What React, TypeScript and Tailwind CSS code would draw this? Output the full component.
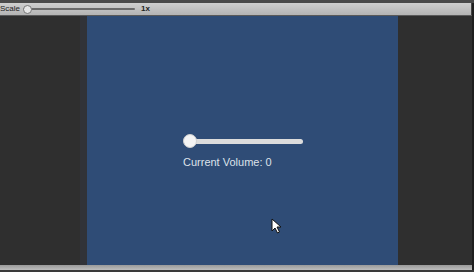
import React from "react";

const Cursor = () => (
  <svg width="11" height="16" viewBox="0 0 11 16" className="absolute left-[271px] top-[218px]">
    <path d="M1 1 L1 13 L4 10 L6.5 15 L8.5 14 L6 9 L10 9 Z" fill="#ffffff" stroke="#111" strokeWidth="1" />
  </svg>
);

export default function App() {
  return (
    <div className="relative w-[474px] h-[272px] bg-[#2e2e2e] overflow-hidden flex flex-col" style={{ fontFamily: "'Liberation Sans', Arial, sans-serif" }}>
      <div className="h-[3px] bg-[#4a4a4a]" />
      {/* toolbar */}
      <div className="h-[13px] bg-gradient-to-b from-[#cfcfcf] to-[#b4b4b4] border-b border-[#5a5a5a] flex items-center pr-[2px]">
        <span className="text-[8px] leading-none text-[#222]">Scale</span>
        <div className="relative ml-[3px] w-[112px] h-[9px] flex items-center">
          <div className="w-full h-[2px] bg-[#6a6a6a] rounded-full" />
          <div className="absolute left-0 top-0 w-[9px] h-[9px] rounded-full bg-[#e6e6e6] border border-[#777]" />
        </div>
        <span className="ml-[6px] text-[8px] font-bold leading-none text-[#222]">1x</span>
        <div className="flex-1" />
        <div className="w-[1px] h-full bg-[#444]" />
      </div>
      {/* main */}
      <div className="flex-1 flex">
        <div className="w-[80px] bg-[#2f2f2f]" />
        <div className="w-[7px] bg-[#313339]" />
        <div className="w-[311px] bg-[#2f4c76] flex flex-col items-start pt-[118px] pl-[96px]">
          <div className="relative w-[120px] h-[14px] flex items-center">
            <div className="ml-[4px] w-[116px] h-[5px] bg-[#dcdcdc] rounded-full" />
            <div className="absolute left-0 top-0 w-[14px] h-[14px] rounded-full bg-[#f4f4f4] border border-[#d0d0d0]" />
          </div>
          <div className="mt-[9px] text-[11px] leading-none text-[#dde2ea]">Current Volume: 0</div>
        </div>
        <div className="flex-1 bg-[#2f2f2f]" />
      </div>
      <div className="h-[5px] bg-gradient-to-b from-[#9a9a9a] to-[#bdbdbd]" />
      <div className="h-[2px] bg-[#3a3a3a]" />
      <div className="absolute right-0 top-[3px] w-[2px] h-[267px] bg-[#1e1e1e]" />
      <Cursor />
    </div>
  );
}
